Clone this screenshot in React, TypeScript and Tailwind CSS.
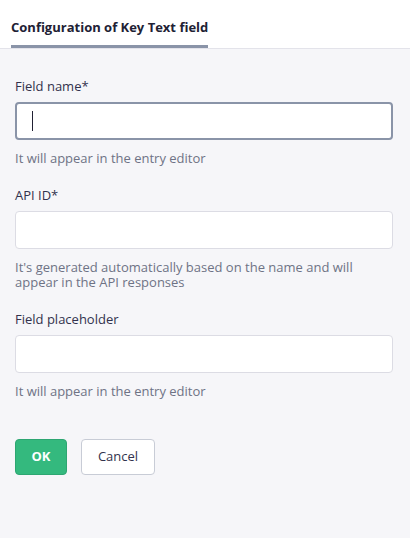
import React from 'react'

function Field({ label, help, focused }: { label: string; help: React.ReactNode; focused?: boolean }) {
  return (
    <div className="flex flex-col">
      <label className="text-[13px] leading-[18px] text-[#32324d]">{label}</label>
      <div
        className={`mt-[7px] h-[38px] rounded-[4px] bg-white flex items-center px-[15px] ${
          focused ? 'border-2 border-[#8a94a8]' : 'border border-[#dcdce4]'
        }`}
      >
        {focused && <span className="w-px h-[20px] bg-[#212134]" />}
      </div>
      <p className="mt-[11px] text-[13px] leading-[15px] text-[#6e7385]">{help}</p>
    </div>
  )
}

export default function App() {
  return (
    <div className="w-[410px] h-[538px] bg-[#f6f6f9] flex flex-col" style={{ fontFamily: '"Open Sans", "Noto Sans", sans-serif' }}>
      <div className="h-[49px] bg-white border-b border-[#e3e3ea] flex items-end px-[11px]">
        <div className="flex flex-col">
          <span className="text-[13px] font-bold text-[#212134] leading-[18px] pb-[9px]">Configuration of Key Text field</span>
          <div className="h-[3px] bg-[#8a94a8]" />
        </div>
      </div>
      <div className="flex flex-col pl-[15px] pt-[28px] pr-[17px] gap-[20px]">
        <Field label="Field name*" help="It will appear in the entry editor" focused />
        <Field label="API ID*" help={<>It's generated automatically based on the name and will<br />appear in the API responses</>} />
        <Field label="Field placeholder" help="It will appear in the entry editor" />
        <div className="flex gap-[14px] mt-[20px]">
          <button className="h-[36px] w-[52px] rounded-[4px] bg-[#34b97e] border border-[#2ea672] text-white text-[13px] font-bold">OK</button>
          <button className="h-[36px] w-[74px] rounded-[4px] bg-white border border-[#c8ccd6] text-[#32324d] text-[13px]">Cancel</button>
        </div>
      </div>
    </div>
  )
}
